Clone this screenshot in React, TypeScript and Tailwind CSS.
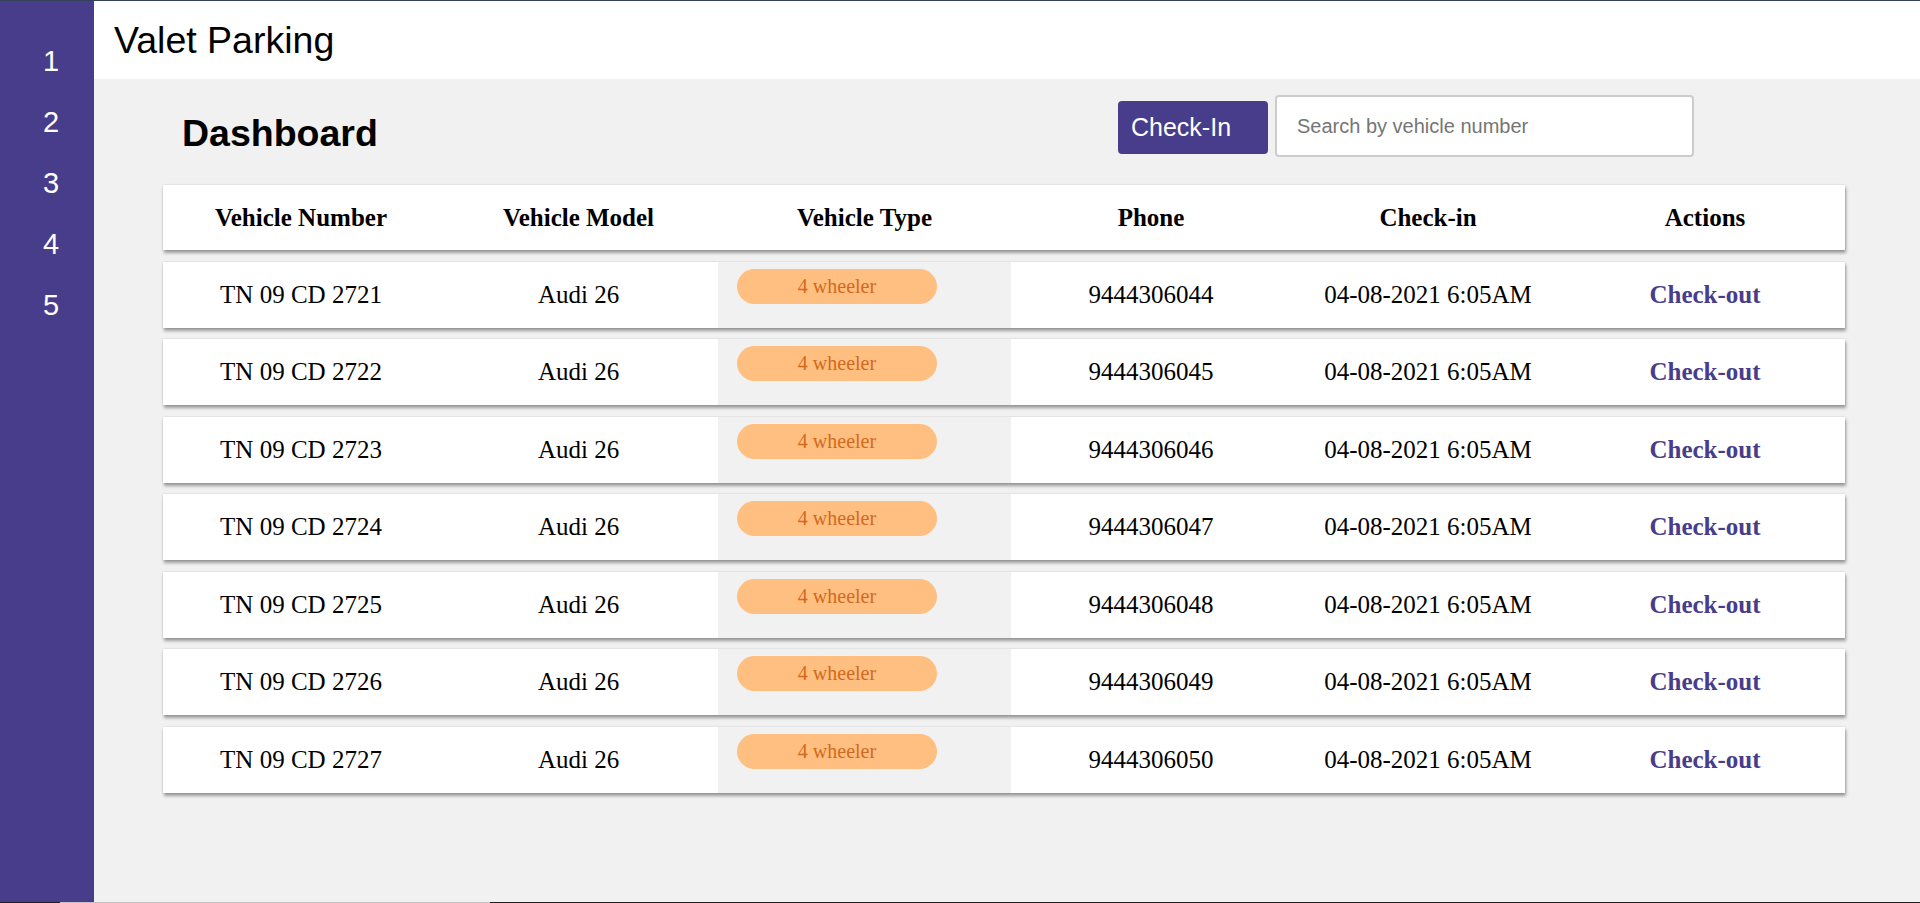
const vehicles = [
	{ number: "TN 09 CD 2721", model: "Audi 26", type: "4 wheeler", phone: "9444306044", checkIn: "04-08-2021 6:05AM" },
	{ number: "TN 09 CD 2722", model: "Audi 26", type: "4 wheeler", phone: "9444306045", checkIn: "04-08-2021 6:05AM" },
	{ number: "TN 09 CD 2723", model: "Audi 26", type: "4 wheeler", phone: "9444306046", checkIn: "04-08-2021 6:05AM" },
	{ number: "TN 09 CD 2724", model: "Audi 26", type: "4 wheeler", phone: "9444306047", checkIn: "04-08-2021 6:05AM" },
	{ number: "TN 09 CD 2725", model: "Audi 26", type: "4 wheeler", phone: "9444306048", checkIn: "04-08-2021 6:05AM" },
	{ number: "TN 09 CD 2726", model: "Audi 26", type: "4 wheeler", phone: "9444306049", checkIn: "04-08-2021 6:05AM" },
	{ number: "TN 09 CD 2727", model: "Audi 26", type: "4 wheeler", phone: "9444306050", checkIn: "04-08-2021 6:05AM" },
];

const headers = ["Vehicle Number", "Vehicle Model", "Vehicle Type", "Phone", "Check-in", "Actions"];

// same column grid for header and rows
const cols = "grid grid-cols-[276px_279px_293px_280px_274px_280px]";
const rowShadow = "shadow-[1px_3px_3px_rgba(0,0,0,0.35),0_0_2px_rgba(0,0,0,0.15)]";

const Sidebar = () => (
	<div className="w-[94px] shrink-0 bg-[#483d8b] pt-[30px] pl-[43px] text-white text-[29px] leading-[61px] font-['Liberation_Sans',sans-serif]">
		{[1, 2, 3, 4, 5].map((n) => (
			<div key={n}>{n}</div>
		))}
	</div>
);

const App = () => {
	return (
		<div className="w-[1920px] h-[903px] flex flex-col overflow-hidden bg-[#f1f1f1]">
			<div className="h-px bg-[#34405a]" />
			<div className="flex flex-1 min-h-0">
				<Sidebar />
				<div className="flex-1 flex flex-col">
					<div id="Header" className="h-[78px] bg-white flex items-center pl-[20px]">
						<span className="text-[37.5px] font-['Liberation_Sans',sans-serif] text-black">Valet Parking</span>
					</div>

					<div id="TopBar" className="flex items-start pl-[88px] font-['Liberation_Sans',sans-serif]">
						<h1 className="mt-[33px] text-[37.5px] leading-[43px] font-bold text-black">Dashboard</h1>
						<div className="ml-auto mr-[226px] flex items-start">
							<button className="mt-[22px] h-[53px] w-[150px] flex items-center pl-[13px] rounded-[4px] bg-[#483d8b] text-white text-[25px]">
								Check-In
							</button>
							<input
								type="text"
								placeholder="Search by vehicle number"
								className="mt-[16px] ml-[7px] h-[62px] w-[419px] rounded-[4px] border-2 border-[#cccccc] bg-white pl-[20px] text-[20px] outline-none placeholder:text-[#757575]"
							/>
						</div>
					</div>

					<div id="Table" className="ml-[69px] mt-[28px] w-[1682px] flex flex-col gap-[11.5px] font-['Liberation_Serif',serif] text-black">
						<div className={`${cols} ${rowShadow} h-[65px] bg-white`}>
							{headers.map((h) => (
								<div key={h} className="flex items-center justify-center text-[25px] font-bold">
									{h}
								</div>
							))}
						</div>
						{vehicles.map((v) => (
							<div key={v.number} className={`${cols} ${rowShadow} h-[66px] bg-white text-[25px]`}>
								<div className="flex items-center justify-center">{v.number}</div>
								<div className="flex items-center justify-center">{v.model}</div>
								<div className="bg-[#f1f1f1] pt-[7px] pl-[19px]">
									<div className="w-[200px] h-[35px] rounded-full bg-[#ffbf80] text-[#d2691e] text-[20px] leading-[35px] text-center">
										{v.type}
									</div>
								</div>
								<div className="flex items-center justify-center">{v.phone}</div>
								<div className="flex items-center justify-center">{v.checkIn}</div>
								<div className="flex items-center justify-center">
									<button className="font-bold text-[#483d8b]">Check-out</button>
								</div>
							</div>
						))}
					</div>
				</div>
			</div>
			<div className="h-px bg-[#1f1f1f] flex">
				<div className="ml-[60px] w-[430px] bg-[#c1c1c1]" />
			</div>
		</div>
	);
};

export default App;
